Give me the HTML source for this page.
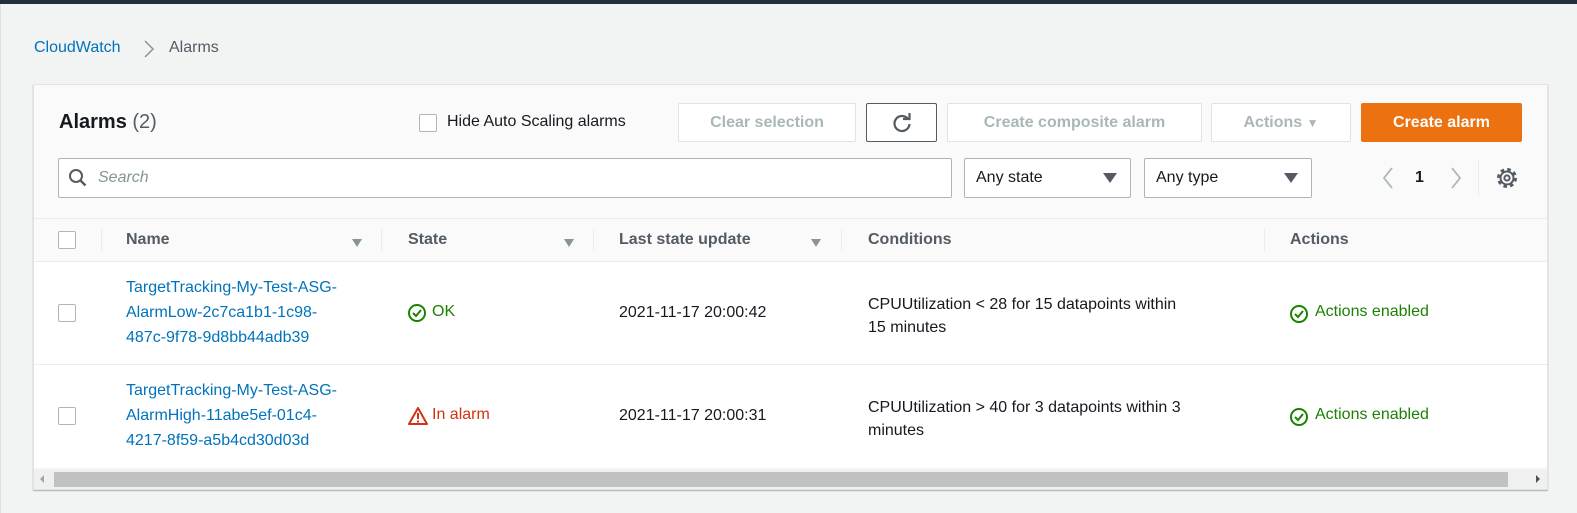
<!DOCTYPE html>
<html><head><meta charset="utf-8"><style>
*{box-sizing:border-box;margin:0;padding:0}
body{width:1577px;height:513px;background:#f2f3f3;font-family:"Liberation Sans",sans-serif;color:#16191f;position:relative;overflow:hidden;font-size:16px}
.a{position:absolute;white-space:nowrap}
.btn{position:absolute;border:1px solid #e0e3e3;background:#fff;border-radius:2px;color:#aab7b8;font-weight:bold;font-size:16px;text-align:center;line-height:37px;height:39px}
.cb{position:absolute;width:18px;height:18px;border:1px solid #aab7b8;border-radius:2px;background:#fff}
.sel{position:absolute;height:40px;border:1px solid #aab7b8;border-radius:2px;background:#fff;line-height:38px;padding-left:11px;font-size:16px}
.tri{position:absolute;width:0;height:0;border-left:7px solid transparent;border-right:7px solid transparent;border-top:10px solid #545b64}
.htri{position:absolute;width:0;height:0;border-left:5px solid transparent;border-right:5px solid transparent;border-top:8px solid #879596}
.hd{position:absolute;font-weight:bold;color:#545b64;font-size:16px;top:231px}
.sep{position:absolute;top:229px;width:1px;height:22px;background:#eaeded}
.lk{color:#0073bb;font-size:16px;line-height:25px}
.g{color:#1d8102}
</style></head><body>
<div class="a" style="left:0;top:0;width:1577px;height:4px;background:#232f3e"></div>
<div class="a" style="left:0;top:4px;width:1px;height:509px;background:#e0e0e0"></div>
<div class="a" style="left:34px;top:39px;color:#0073bb">CloudWatch</div>
<svg class="a" style="left:143px;top:40px" width="12" height="18"><path d="M2 1l8 8-8 8" stroke="#879596" stroke-width="1.5" fill="none"/></svg>
<div class="a" style="left:169px;top:39px;color:#545b64">Alarms</div>

<div class="a" style="left:33px;top:84px;width:1515px;height:406px;background:#fafafa;border:1px solid #e0e3e3;box-shadow:0 1px 1px rgba(0,28,36,.3)"></div>
<div class="a" style="left:34px;top:261px;width:1513px;height:206px;background:#fff"></div>
<div class="a" style="left:34px;top:218px;width:1513px;height:1px;background:#eaeded"></div>
<div class="a" style="left:34px;top:261px;width:1513px;height:1px;background:#eaeded"></div>
<div class="a" style="left:34px;top:364px;width:1513px;height:1px;background:#eaeded"></div>

<div class="a" style="left:59px;top:111px;font-size:20px;font-weight:bold">Alarms <span style="font-weight:normal;color:#545b64">(2)</span></div>
<div class="cb" style="left:419px;top:114px"></div>
<div class="a" style="left:447px;top:113px">Hide Auto Scaling alarms</div>
<div class="btn" style="left:678px;top:103px;width:178px">Clear selection</div>
<div class="btn" style="left:866px;top:103px;width:71px;border-color:#545b64"><svg width="22" height="22" style="margin-top:8px" viewBox="0 0 22 22"><path d="M17 7A7.5 7.5 0 1 0 18.5 12" stroke="#545b64" stroke-width="2.2" fill="none"/><path d="M12 7h6.5V1" stroke="#545b64" stroke-width="2.2" fill="none"/></svg></div>
<div class="btn" style="left:947px;top:103px;width:255px">Create composite alarm</div>
<div class="btn" style="left:1211px;top:103px;width:140px">Actions <span style="font-size:12px">▼</span></div>
<div class="btn" style="left:1361px;top:103px;width:161px;background:#ec7211;border-color:#ec7211;color:#fff">Create alarm</div>

<div class="a" style="left:58px;top:158px;width:894px;height:40px;background:#fff;border:1px solid #aab7b8;border-radius:2px"></div>
<svg class="a" style="left:68px;top:168px" width="20" height="20"><circle cx="8" cy="8" r="6" stroke="#545b64" stroke-width="2" fill="none"/><path d="M12.5 12.5l5 5" stroke="#545b64" stroke-width="2.4"/></svg>
<div class="a" style="left:98px;top:169px;color:#879596;font-style:italic">Search</div>
<div class="sel" style="left:964px;top:158px;width:167px">Any state</div><div class="tri" style="left:1103px;top:173px"></div>
<div class="sel" style="left:1144px;top:158px;width:168px">Any type</div><div class="tri" style="left:1284px;top:173px"></div>
<svg class="a" style="left:1382px;top:167px" width="12" height="22"><path d="M10 1L2 11l8 10" stroke="#aab7b8" stroke-width="1.8" fill="none"/></svg>
<div class="a" style="left:1415px;top:169px;font-weight:bold">1</div>
<svg class="a" style="left:1450px;top:167px" width="12" height="22"><path d="M2 1l8 10-8 10" stroke="#aab7b8" stroke-width="1.8" fill="none"/></svg>
<div class="a" style="left:1478px;top:160px;width:1px;height:36px;background:#eaeded"></div>
<svg class="a" style="left:1495px;top:166px" width="24" height="24" viewBox="0 0 24 24"><circle cx="12" cy="12" r="8.5" stroke="#545b64" stroke-width="3" fill="none" stroke-dasharray="3.5 3.17"/><circle cx="12" cy="12" r="6.5" stroke="#545b64" stroke-width="2" fill="none"/><circle cx="12" cy="12" r="2.6" stroke="#545b64" stroke-width="2" fill="none"/></svg>

<div class="cb" style="left:58px;top:231px"></div>
<div class="sep" style="left:101px"></div>
<div class="hd" style="left:126px">Name</div><div class="htri" style="left:352px;top:239px"></div>
<div class="sep" style="left:381px"></div>
<div class="hd" style="left:408px">State</div><div class="htri" style="left:564px;top:239px"></div>
<div class="sep" style="left:593px"></div>
<div class="hd" style="left:619px">Last state update</div><div class="htri" style="left:811px;top:239px"></div>
<div class="sep" style="left:841px"></div>
<div class="hd" style="left:868px">Conditions</div>
<div class="sep" style="left:1264px"></div>
<div class="hd" style="left:1290px">Actions</div>

<div class="cb" style="left:58px;top:304px"></div>
<div class="a lk" style="left:126px;top:275px">TargetTracking-My-Test-ASG-<br>AlarmLow-2c7ca1b1-1c98-<br>487c-9f78-9d8bb44adb39</div>
<svg class="a" style="left:407px;top:303px" width="20" height="20"><circle cx="10" cy="10" r="8" stroke="#1d8102" stroke-width="2" fill="none"/><path d="M6 10l3 3 5-6" stroke="#1d8102" stroke-width="2" fill="none"/></svg>
<div class="a g" style="left:432px;top:303px">OK</div>
<div class="a" style="left:619px;top:304px">2021-11-17 20:00:42</div>
<div class="a" style="left:868px;top:293px;line-height:23px">CPUUtilization &lt; 28 for 15 datapoints within<br>15 minutes</div>
<svg class="a" style="left:1289px;top:304px" width="20" height="20"><circle cx="10" cy="10" r="8" stroke="#1d8102" stroke-width="2" fill="none"/><path d="M6 10l3 3 5-6" stroke="#1d8102" stroke-width="2" fill="none"/></svg>
<div class="a g" style="left:1315px;top:303px">Actions enabled</div>

<div class="cb" style="left:58px;top:407px"></div>
<div class="a lk" style="left:126px;top:378px">TargetTracking-My-Test-ASG-<br>AlarmHigh-11abe5ef-01c4-<br>4217-8f59-a5b4cd30d03d</div>
<svg class="a" style="left:407px;top:406px" width="22" height="20"><path d="M11 2L2 18h18z" stroke="#d13212" stroke-width="2" fill="none" stroke-linejoin="round"/><path d="M11 7v6M11 14.5v2" stroke="#d13212" stroke-width="2"/></svg>
<div class="a" style="left:432px;top:406px;color:#d13212">In alarm</div>
<div class="a" style="left:619px;top:407px">2021-11-17 20:00:31</div>
<div class="a" style="left:868px;top:396px;line-height:23px">CPUUtilization &gt; 40 for 3 datapoints within 3<br>minutes</div>
<svg class="a" style="left:1289px;top:407px" width="20" height="20"><circle cx="10" cy="10" r="8" stroke="#1d8102" stroke-width="2" fill="none"/><path d="M6 10l3 3 5-6" stroke="#1d8102" stroke-width="2" fill="none"/></svg>
<div class="a g" style="left:1315px;top:406px">Actions enabled</div>

<div class="a" style="left:34px;top:469px;width:1513px;height:20px;background:#f0f0f0"></div>
<div class="a" style="left:54px;top:472px;width:1454px;height:15px;background:#c1c1c1"></div>
<div class="a" style="left:40px;top:475px;width:0;height:0;border-top:4px solid transparent;border-bottom:4px solid transparent;border-right:4px solid #a3a3a3"></div>
<div class="a" style="left:1536px;top:475px;width:0;height:0;border-top:4px solid transparent;border-bottom:4px solid transparent;border-left:4px solid #505050"></div>
</body></html>
